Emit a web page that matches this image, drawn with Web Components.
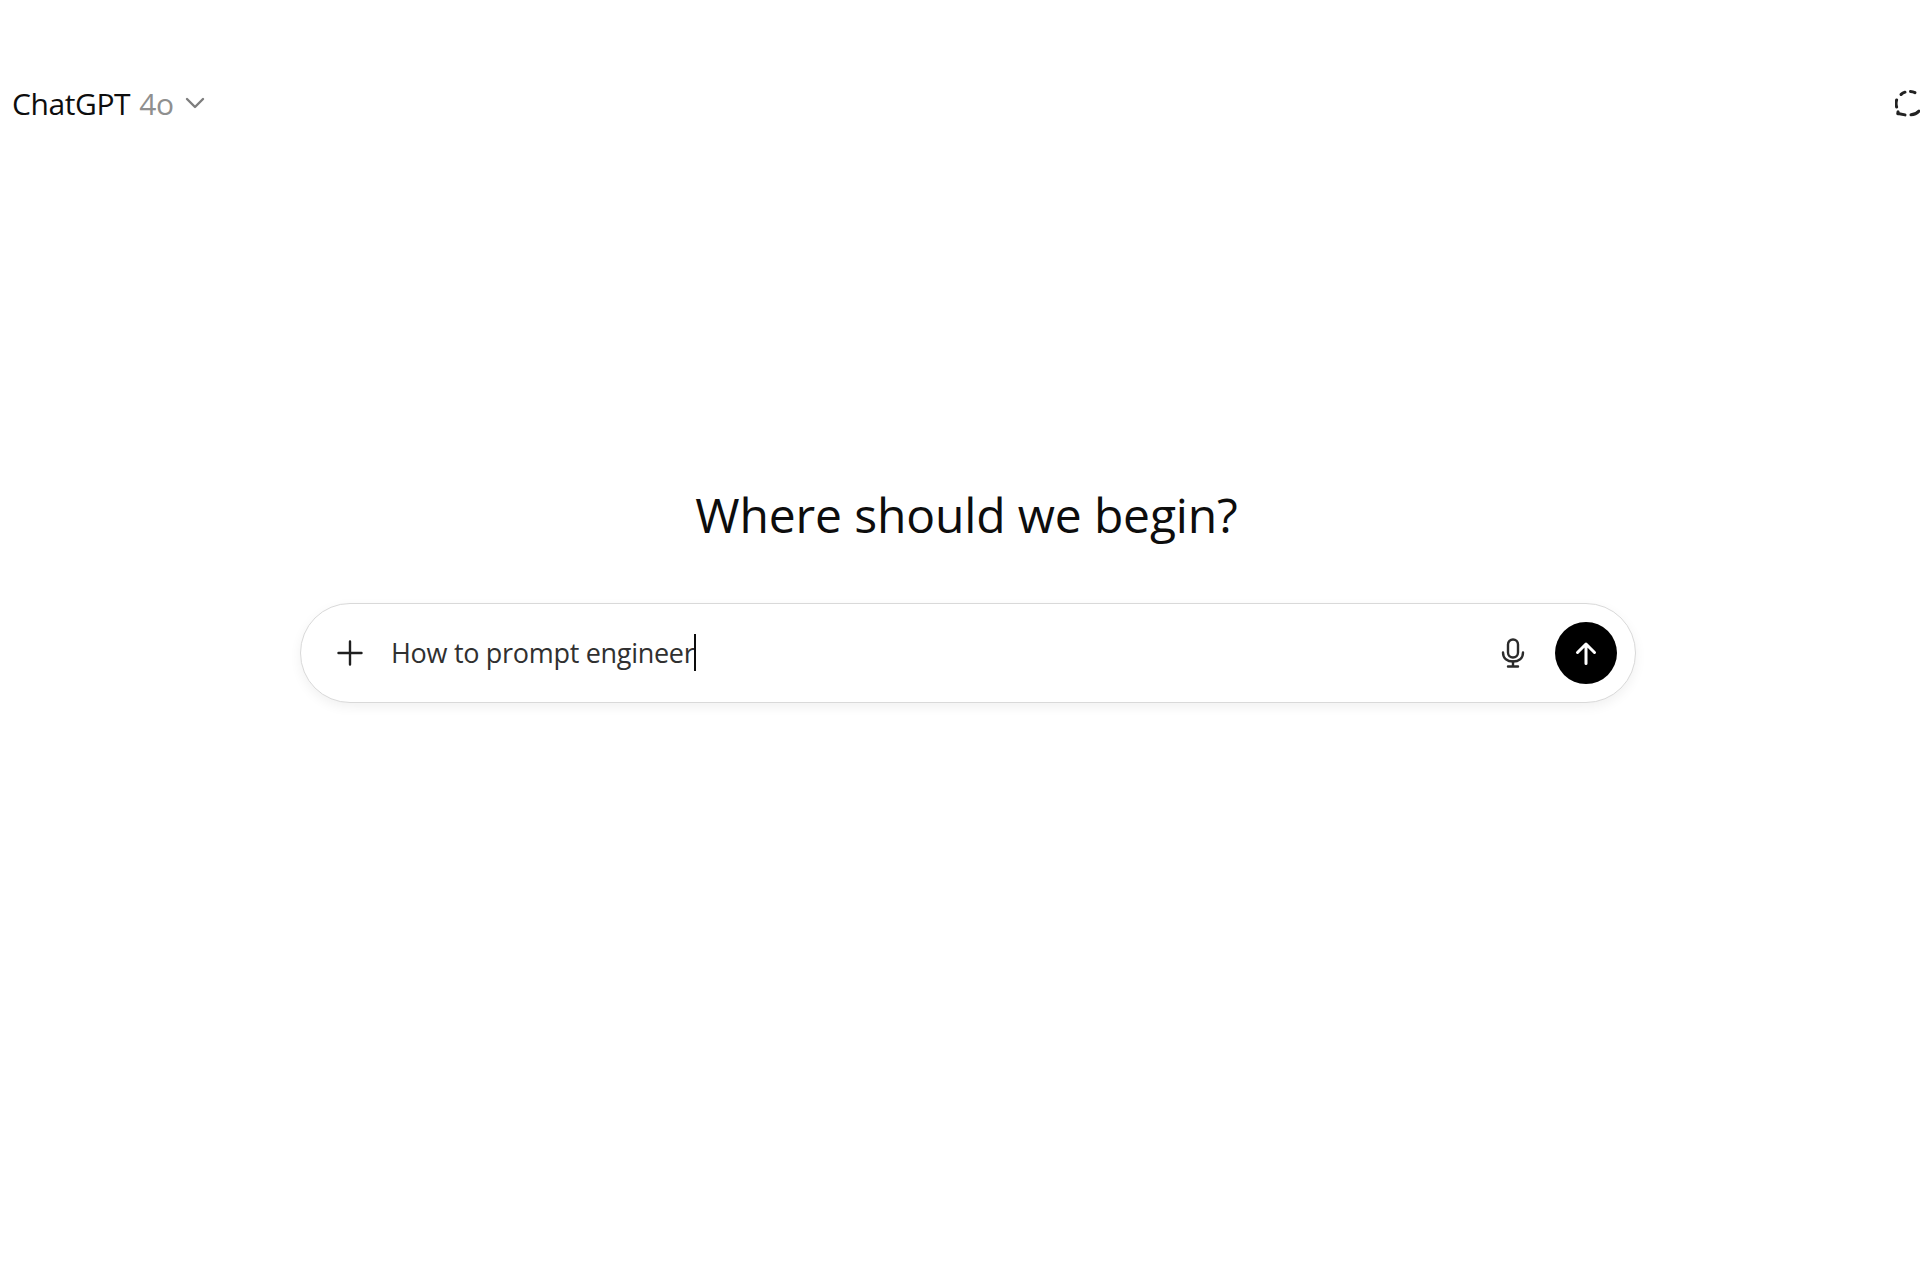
<!DOCTYPE html>
<html lang="en">
<head>
<meta charset="utf-8">
<title>ChatGPT</title>
<style>
    html, body {
        margin: 0;
        height: 100%;
        overflow: hidden;
        background: #fff;
    }
    body {
        font-family: "Open Sans", "Noto Sans", "Liberation Sans", sans-serif;
        color: #0d0d0d;
    }
    chat-page {
        width: 1936px;
    }
</style>
</head>
<body>
<chat-page>
    <chat-header model="ChatGPT" version="4o"></chat-header>
    <chat-composer heading="Where should we begin?" text="How to prompt engineer"></chat-composer>
</chat-page>

<script>
class ChatPage extends HTMLElement {
    constructor() {
        super();
        this.attachShadow({ mode: 'open' });
        this.shadowRoot.innerHTML = `
            <style>
                :host {
                    display: block;
                    height: 1280px;
                }
            </style>
            <slot></slot>
        `;
    }
}

class ChatHeader extends HTMLElement {
    constructor() {
        super();
        this.attachShadow({ mode: 'open' });
        this.shadowRoot.innerHTML = `
            <style>
                :host {
                    display: flex;
                    align-items: center;
                    justify-content: space-between;
                    height: 40px;
                    padding: 83px 15px 0 12px;
                    font-size: 30px;
                    letter-spacing: -0.4px;
                }
                .model { display: flex; align-items: center; }
                .version { color: #8f8f8f; margin-left: 9px; }
                .chevron { margin-left: 11px; }
                svg { display: block; }
            </style>
            <div class="model">
                <span>${this.getAttribute('model')}</span>
                <span class="version">${this.getAttribute('version')}</span>
                <svg class="chevron" width="20" height="12" viewBox="0 0 20 12" fill="none" stroke="#7d7d7d" stroke-width="2.4" stroke-linecap="round" stroke-linejoin="round"><path d="M2 2l8 8 8-8"/></svg>
            </div>
            <svg class="temp" width="26" height="28" viewBox="0 0 26 28" fill="none" stroke="#222" stroke-width="3" stroke-linecap="round">
                <path d="M6 5.5A12 12 0 0 1 10 3.2"/>
                <path d="M15.5 2.4A12 12 0 0 1 20 3.6"/>
                <path d="M1.6 11A12 12 0 0 0 1.6 18"/>
                <path d="M3 24.5l7 1.4"/>
                <path d="M3 22.8v2"/>
                <path d="M16 25.8A12 12 0 0 0 24 22"/>
            </svg>
        `;
    }
}

class ChatComposer extends HTMLElement {
    constructor() {
        super();
        this.attachShadow({ mode: 'open' });
        this.shadowRoot.innerHTML = `
            <style>
                :host {
                    display: flex;
                    flex-direction: column;
                    align-items: center;
                    padding-top: 362px;
                }
                h1 {
                    margin: 0 0 58px;
                    padding-right: 3px;
                    font-size: 48px;
                    line-height: 60px;
                    font-weight: 400;
                    letter-spacing: -0.15px;
                }
                .box {
                    box-sizing: border-box;
                    width: 1336px;
                    height: 100px;
                    display: flex;
                    align-items: center;
                    padding: 0 18px 0 36px;
                    background: #fff;
                    border: 1px solid #d9d9d9;
                    border-radius: 50px;
                    box-shadow: 0 4px 12px rgba(0, 0, 0, 0.06);
                }
                .plus { flex: none; }
                .text {
                    flex: 1;
                    display: flex;
                    align-items: center;
                    margin-left: 28px;
                    padding-bottom: 2px;
                    font-size: 27px;
                    letter-spacing: -0.3px;
                    color: #303030;
                }
                .caret {
                    width: 2px;
                    height: 37px;
                    margin-left: 0;
                    background: #0d0d0d;
                }
                .mic { flex: none; margin-right: 30px; }
                .send {
                    flex: none;
                    width: 62px;
                    height: 62px;
                    border-radius: 50%;
                    background: #000;
                    display: flex;
                    align-items: center;
                    justify-content: center;
                }
                svg { display: block; }
            </style>
            <h1>${this.getAttribute('heading')}</h1>
            <div class="box">
                <svg class="plus" width="26" height="26" viewBox="0 0 26 26" fill="none" stroke="#1f1f1f" stroke-width="2.4" stroke-linecap="round"><path d="M13 1.5v23M1.5 13h23"/></svg>
                <div class="text"><span>${this.getAttribute('text')}</span><span class="caret"></span></div>
                <svg class="mic" width="24" height="30" viewBox="0 0 24 30" fill="none" stroke="#2b2b2b" stroke-width="2.4" stroke-linecap="round" stroke-linejoin="round">
                    <rect x="7" y="1.5" width="10" height="18" rx="5"/>
                    <path d="M2 14.500c0 6 4.400 9 10 9s10-3 10-9"/>
                    <path d="M12 23.500v5M7 28.500h10"/>
                </svg>
                <div class="send">
                    <svg width="28" height="28" viewBox="0 0 28 28" fill="none" stroke="#fff" stroke-width="3" stroke-linecap="round" stroke-linejoin="round"><path d="M14 24.500V5M5.500 13.500L14 5l8.500 8.500"/></svg>
                </div>
            </div>
        `;
    }
}

customElements.define('chat-page', ChatPage);
customElements.define('chat-header', ChatHeader);
customElements.define('chat-composer', ChatComposer);
</script>
</body>
</html>
